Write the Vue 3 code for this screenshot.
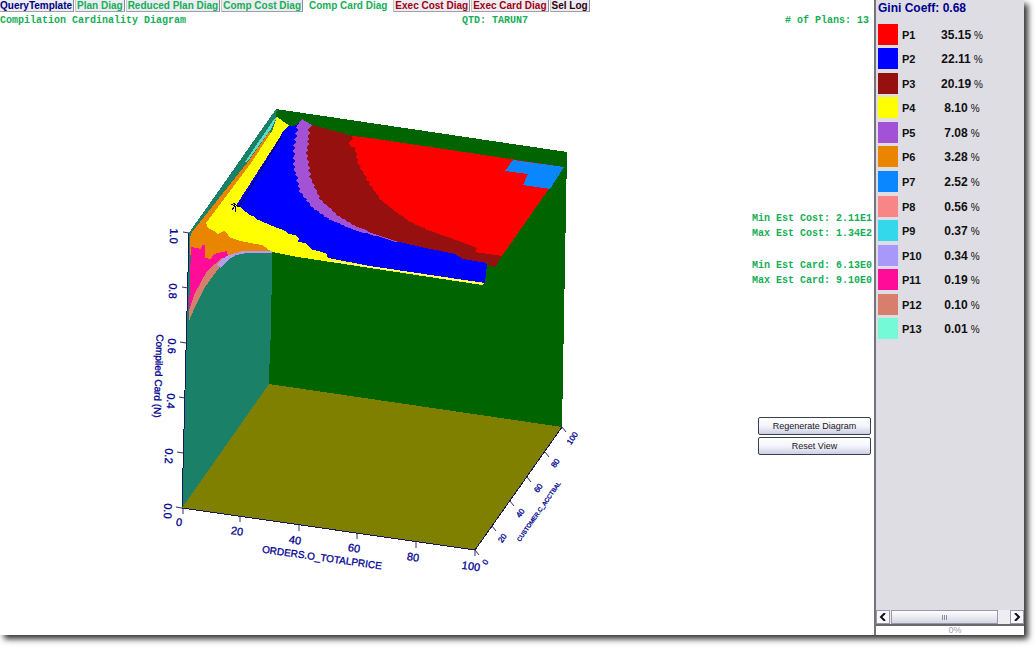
<script setup>
const tabs = [
  { label: 'QueryTemplate', tone: 'navy' },
  { label: 'Plan Diag', tone: 'green' },
  { label: 'Reduced Plan Diag', tone: 'green' },
  { label: 'Comp Cost Diag', tone: 'green' },
  { label: 'Comp Card Diag', tone: 'green', active: true },
  { label: 'Exec Cost Diag', tone: 'red' },
  { label: 'Exec Card Diag', tone: 'red' },
  { label: 'Sel Log', tone: 'dark' }
]

const plans = [
  ['P1', '35.15', '#ff0000'],
  ['P2', '22.11', '#0000ff'],
  ['P3', '20.19', '#961010'],
  ['P4', '8.10', '#ffff00'],
  ['P5', '7.08', '#a352d6'],
  ['P6', '3.28', '#ea8500'],
  ['P7', '2.52', '#0a87ff'],
  ['P8', '0.56', '#f88686'],
  ['P9', '0.37', '#33d8ea'],
  ['P10', '0.34', '#a898fa'],
  ['P11', '0.19', '#ff0d98'],
  ['P12', '0.10', '#d87e6c'],
  ['P13', '0.01', '#74fad6']
]

// Breaks a boundary into small sawtooth steps, as the sampled grid cells produce.
function jag(points, amount = 1, step = 3) {
  const out = []
  let n = 0
  for (let i = 0; i < points.length - 1; i++) {
    const [x1, y1] = points[i]
    const [x2, y2] = points[i + 1]
    const count = Math.max(1, Math.round(Math.hypot(x2 - x1, y2 - y1) / step))
    for (let k = 0; k < count; k++) {
      const t = k / count
      const side = n++ % 2 ? amount : -amount
      out.push([x1 + (x2 - x1) * t + side, y1 + (y2 - y1) * t])
    }
  }
  out.push(points[points.length - 1])
  return out
}
const join = (...parts) => parts.flat().map(p => p.map(Math.round).join(',')).join(' ')

const redEdge = [[353, 136], [349, 145], [355, 148], [358, 163], [367, 180], [380, 199], [392, 209], [410, 222], [430, 231], [450, 238], [477, 248]]
const purpleRight = [[309, 130], [307, 153], [310, 177], [320, 199], [337, 215], [357, 227], [380, 236]]
const purpleLeft = [[297, 127], [294, 145], [294, 167], [300, 192], [313, 208], [330, 220], [357, 231], [380, 237]]
const blueLower = [[238, 205], [247, 213], [260, 221], [278, 228], [286, 231], [287, 234], [297, 235], [299, 242], [308, 244], [310, 249], [325, 253], [328, 258]]

const surface = [
  { fill: '#ea8500', points: '270,131 247,163 192,232 190,238 190,255 205,262 230,255 240,252 272,253 272,245' },
  { fill: '#ffff00', points: '277,117 272,131 251,163 206,223 208,228 214,231 218,234 224,231 227,233 229,237 237,240 250,243 262,245 272,252 298,257 370,268 482,285 485,283 370,250 290,126' },
  { fill: '#0000ff', points: join([[303, 121], [294, 126], [288, 126], [282, 133], [280, 137]], [[237, 204]], jag(blueLower, 1, 4), [[370, 266], [478, 282], [485, 283], [487, 264], [380, 200]]) },
  { fill: '#a352d6', points: join([[302, 119], [297, 126]], jag(purpleLeft), [[396, 242], [420, 244], [350, 180], [312, 125]]) },
  { fill: '#961010', points: join([[312, 125]], jag(purpleRight), [[395, 241], [430, 249], [455, 254], [463, 259], [487, 263], [495, 267], [502, 256], [450, 150], [353, 136]]) },
  { fill: '#ff0000', points: join(jag(redEdge), [[475, 252], [502, 256], [564, 167], [370, 138]]) },
  { fill: '#0a87ff', points: '513,160 564,167 550,189 523,185 528,174 505,171' },
  { fill: '#ff0d98', points: '191,247 201,249 202,245 205,245 205,258 211,259 214,254 227,251 228,256 215,266 199,291 189,311' },
  { fill: '#d87e6c', points: '189,310 195,293 207,271 222,258 226,259 213,276 205,287 198,301 189,321' },
  { fill: '#1a8068', points: '272,253 250,253 240,254 232,257 224,263 216,272 208,283 200,297 194,309 189,321 189,340 271,340' },
  { fill: '#b59cf0', points: '217,264 222,259 229,255 243,251 272,251 272,253 246,253 236,255 228,260 220,268' }
]

const xTicks = [
  [0, 183, 508, 179, 522], [20, 240, 516, 237, 531], [40, 299, 525, 295, 540],
  [60, 357, 533, 354, 548], [80, 416, 542, 413, 557], [100, 475, 550, 471, 566]
]
const zTicks = [
  ['1.0', 189, 233, 174, 236], ['0.8', 188, 288, 173, 291], ['0.6', 186, 343, 172, 346],
  ['0.4', 185, 398, 171, 401], ['0.2', 183, 453, 169, 456], ['0.0', 182, 508, 168, 511]
]
const yTicks = [
  [0, 475, 550, 485, 562], [20, 492, 526, 502, 538], [40, 510, 501, 520, 513],
  [60, 527, 477, 538, 488], [80, 545, 452, 555, 463], [100, 562, 427, 572, 438]
]
</script>

<template>
  <div class="desktop">
    <div class="window">
      <main class="main">
        <nav class="tabs" aria-label="Diagrams">
          <button v-for="t in tabs" :key="t.label" type="button" class="tab" :class="[t.tone, { active: t.active }]">{{ t.label }}</button>
        </nav>
        <header class="info">
          <span>Compilation Cardinality Diagram</span>
          <span>QTD: TARUN7</span>
          <span class="count"># of Plans: 13</span>
        </header>
        <div class="body">
          <svg class="diagram" viewBox="0 30 751 600" role="img" aria-label="Compilation cardinality surface">
            <g shape-rendering="crispEdges">
              <polygon points="276,109 189,233 182,508 269,384" fill="#1a8068" />
              <polygon points="276,109 567,152 562,427 269,384" fill="#006400" />
              <polygon points="269,384 562,427 475,550 182,508" fill="#808000" />
              <polygon v-for="(s, i) in surface" :key="i" :points="s.points" :fill="s.fill" />
              <polygon points="277,117 271,129 247,162 245,162 274,119" fill="#62dcc0" />
              <path d="M277 110L190 233" fill="none" stroke="#1a8068" stroke-width="2" />
              <path d="M189 233L182 508L475 550L562 427" fill="none" stroke="#17175c" />
              <path d="M231 204L235 206L232 210M235 206L235 212M233 203L239 207L281 137" fill="none" stroke="#000060" />
              <path d="M487 264L495 267" stroke="#961010" />
              <path d="M330 261L400 271L482 284" fill="none" stroke="#ffffb0" />
            </g>
            <g stroke="#30306c">
              <path v-for="t in xTicks" :key="t[0]" :d="`M${t[1]} ${t[2]}v6`" />
              <path v-for="t in zTicks" :key="t[0]" :d="`M${t[1]} ${t[2]}l-6 -1`" />
              <path v-for="t in yTicks" :key="t[0]" :d="`M${t[1]} ${t[2]}l4 5`" />
            </g>
            <g class="axis">
              <text v-for="t in xTicks" :key="t[0]" :transform="`translate(${t[3]} ${t[4]}) rotate(8)`" dy="4">{{ t[0] }}</text>
              <text class="title" transform="translate(322 557) rotate(8)" dy="4">ORDERS.O_TOTALPRICE</text>
              <text v-for="t in zTicks" :key="t[0]" :transform="`translate(${t[3]} ${t[4]}) rotate(92)`" dy="4">{{ t[0] }}</text>
              <text class="title" transform="translate(159 376) rotate(92)" dy="4">Compiled Card (N)</text>
            </g>
            <g class="axis far">
              <text v-for="t in yTicks" :key="t[0]" :transform="`translate(${t[3]} ${t[4]}) rotate(-55)`" dy="3">{{ t[0] }}</text>
              <text class="far-title" transform="translate(538 511) rotate(-55)" dy="3">CUSTOMER.C_ACCTBAL</text>
            </g>
          </svg>
          <aside class="side">
            <div class="stats">
              <p>Min Est Cost: 2.11E1</p>
              <p>Max Est Cost: 1.34E2</p>
              <p class="gap">Min Est Card: 6.13E0</p>
              <p>Max Est Card: 9.10E0</p>
            </div>
            <div class="actions">
              <button type="button">Regenerate Diagram</button>
              <button type="button">Reset View</button>
            </div>
          </aside>
        </div>
      </main>
      <section class="legend">
        <h2>Gini Coeff: 0.68</h2>
        <ul>
          <li v-for="p in plans" :key="p[0]">
            <i class="swatch" :style="{ background: p[2] }"></i>
            <span class="name">{{ p[0] }}</span>
            <span class="share"><b>{{ p[1] }}</b>%</span>
          </li>
        </ul>
        <div class="scroll">
          <button type="button" aria-label="Scroll left"><svg viewBox="0 0 8 8"><path d="M6 0L2 4L6 8" /></svg></button>
          <div class="track"><div class="thumb"><i></i><i></i><i></i></div></div>
          <button type="button" aria-label="Scroll right"><svg viewBox="0 0 8 8"><path d="M2 0L6 4L2 8" /></svg></button>
        </div>
        <div class="progress">0%</div>
      </section>
    </div>
  </div>
</template>

<style>
body { background: #fff; overflow: hidden; }
</style>

<style scoped>
* { box-sizing: border-box; }
.desktop {
  display: flex;
  min-height: 100vh;
  padding: 0 12px 12px 0;
  font-family: "Liberation Sans", Arial, sans-serif;
}
.window {
  flex: 1;
  display: flex;
  min-width: 0;
  background: #fff;
  box-shadow: 4px 4px 6px #333;
}
.main { flex: 1; min-width: 0; display: flex; flex-direction: column; }
.tabs { display: flex; gap: 1px; height: 12px; align-items: flex-start; }
.tab {
  height: 12px;
  padding: 0 1px;
  border: 0;
  border-right: 1px solid #8c8c98;
  border-bottom: 1px solid #a0a0ac;
  border-left: 1px solid #c8c8d0;
  background: #ececf3;
  font: bold 10px/11px "Liberation Sans", Arial, sans-serif;
  white-space: nowrap;
}
.tab:first-child { padding-left: 0; border-left: 0; }
.tab.active { background: #fff; border-color: #fff; line-height: 8px; padding: 0 4px; }
.navy { color: #000080; }
.green { color: #16ae58; }
.red { color: #a00010; }
.dark { color: #300008; }
.info {
  display: grid;
  grid-template-columns: 462px auto auto;
  align-items: center;
  height: 18px;
  padding-right: 5px;
  font: bold 10px/18px "Liberation Mono", monospace;
  color: #16ae58;
}
.count { text-align: right; }
.body { flex: 1; display: flex; align-items: flex-start; }
.diagram { flex: 1; min-width: 0; max-width: 751px; display: block; }
.axis {
  font: 11px "Liberation Sans", Arial, sans-serif;
  fill: #000090;
  stroke: #000090;
  stroke-width: 0.3px;
  text-anchor: middle;
}
.title { font-size: 10px; }
.far { font-size: 8px; }
.far-title { font-size: 6px; }
.side { width: 123px; margin-left: auto; padding: 181px 2px 0 0; }
.stats { font: bold 10px/15px "Liberation Mono", monospace; color: #16ae58; }
.stats p { margin: 0; text-align: right; white-space: nowrap; }
.stats .gap { margin-top: 17px; }
.actions { display: grid; gap: 2px; margin: 129px 1px 0 7px; }
.actions button {
  height: 18px;
  padding: 0;
  border: 1px solid #384050;
  border-radius: 2px;
  background: linear-gradient(#fff, #f4f4fc 50%, #cdd0e4);
  color: #181820;
  font: 9px/14px "Liberation Sans", sans-serif;
}
.legend {
  width: 150px;
  display: flex;
  flex-direction: column;
  border-left: 2px solid #74747c;
  background: #dedde3;
}
.legend h2 { margin: 0; padding-left: 2px; font: bold 12px/16px "Liberation Sans", sans-serif; color: #000090; }
.legend ul {
  display: grid;
  grid-auto-rows: 1fr;
  height: 319px;
  margin: 6px 0 0;
  padding: 0;
  list-style: none;
}
.legend li { display: grid; grid-template-columns: 20px 31px 50px; column-gap: 4px; align-items: center; padding-left: 2px; color: #101010; }
.swatch { width: 20px; height: 21px; }
.name { padding-top: 1px; font-size: 11px; font-weight: bold; }
.share { display: flex; align-items: baseline; justify-content: center; gap: 3px; padding-top: 1px; font-size: 10px; }
.share b { font-size: 12px; }
.scroll { display: flex; gap: 1px; height: 16px; margin-top: auto; border-bottom: 2px solid #686870; background: #eeeef2; }
.scroll button { width: 14px; padding: 0; border: 1px solid #9898a8; background: #f8f8fc; display: grid; place-items: center; }
.scroll svg { width: 8px; height: 8px; fill: none; stroke: #101018; stroke-width: 2px; }
.track { flex: 1; display: flex; }
.thumb {
  width: 91%;
  display: flex;
  align-items: center;
  justify-content: center;
  gap: 1px;
  border: 1px solid #9898a8;
  background: linear-gradient(#fff, #d4d6e4);
}
.thumb i { width: 1px; height: 5px; background: #8890a8; }
.progress { background: #fff; color: #a0a0ac; text-align: center; font-size: 9px; line-height: 9px; padding-left: 10px; }
</style>
